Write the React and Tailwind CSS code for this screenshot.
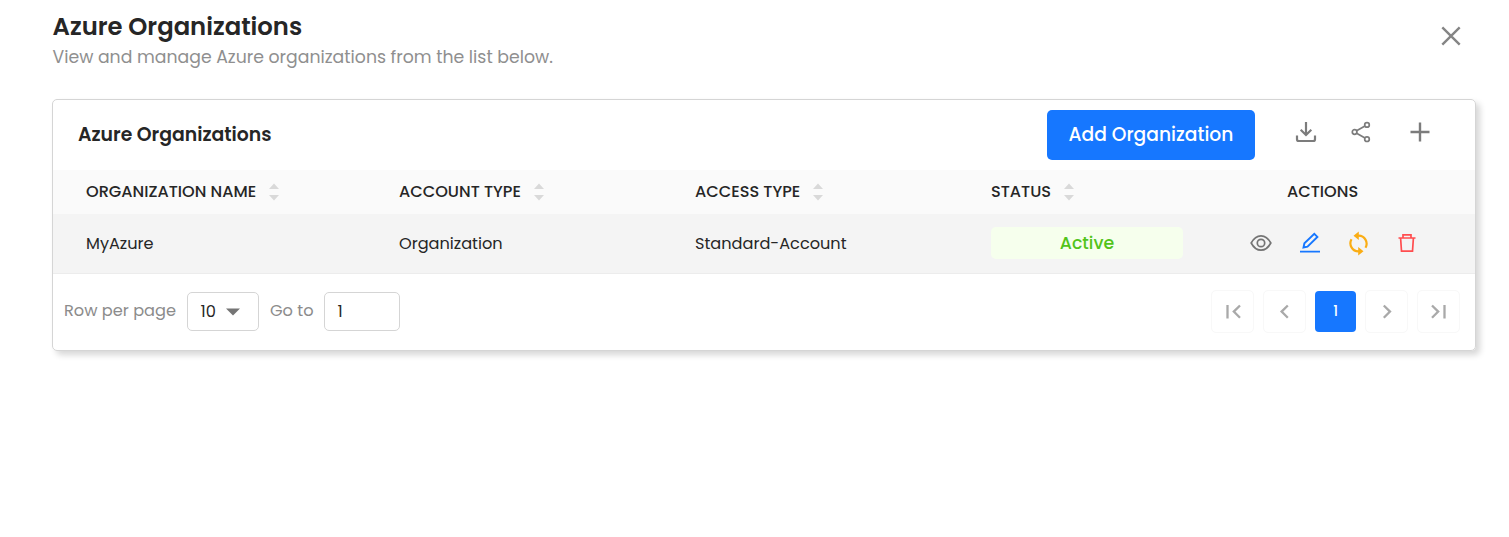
import React from "react";

const Sorter = () => (
  <svg width="10" height="18" viewBox="0 0 10 18" fill="#d9d9d9" className="shrink-0">
    <path d="M0 6 L5 0.5 L10 6Z M0 12 L5 17.5 L10 12Z" />
  </svg>
);

const headers = [
  { label: "ORGANIZATION NAME", style: "w-[313px]" },
  { label: "ACCOUNT TYPE", style: "w-[296px]" },
  { label: "ACCESS TYPE", style: "w-[296px]" },
  { label: "STATUS", style: "w-[225px]" },
];

function Page({ children }) {
  return (
    <button className="flex h-[43px] w-[43px] items-center justify-center rounded-[5px] border border-[#f8f8f8] bg-white">
      {children}
    </button>
  );
}

const Chevrons = ({ d }) => (
  <svg width="18" height="18" viewBox="0 0 18 18" fill="none" stroke="#a9a9a9" strokeWidth="2.3">
    <path d={d} />
  </svg>
);

export default function App() {
  return (
    <div className="h-[537px] w-[1509px] overflow-hidden bg-white font-[Poppins,Inter,sans-serif] text-[#262626]">
      <header className="flex h-[99px] justify-between pr-[48px] pl-[52.5px]">
        <div className="pt-[9px]">
          <h1 className="w-max text-[24.3px] leading-[36px] font-semibold">Azure Organizations</h1>
          <p className="w-max text-[17.3px] leading-[24px] text-[#8f8f8f]">View and manage Azure organizations from the list below.</p>
        </div>
        <svg className="mt-[26px]" width="20" height="20" viewBox="0 0 20 20" stroke="#858585" strokeWidth="2.4">
          <path d="M1.3 1.3 L18.7 18.7 M18.7 1.3 L1.3 18.7" />
        </svg>
      </header>

      <main className="ml-[52px] h-[252px] w-[1424px] rounded-[5px] border border-[#d5d5d5] shadow-[4px_4px_6px_rgba(0,0,0,0.16)]">
        <div className="flex h-[70px] items-start pl-[25px]">
          <h2 className="w-[969px] pt-[21px] text-[18.85px] leading-[27px] font-semibold">Azure Organizations</h2>
          <button className="mt-[10px] flex h-[50px] w-[208px] items-center justify-center rounded-[5px] bg-[#1677ff] text-[18.7px] font-medium whitespace-nowrap text-white">
            <span>Add Organization</span>
          </button>
          <svg className="mt-[21px] ml-[40px]" width="22" height="22" viewBox="0 0 22 22" fill="none" stroke="#7c7c7c" strokeWidth="2.2">
            <path d="M11 1v13M5.7 8.8L11 14l5.3-5.2M2 14.5v3.7q0 1.8 1.8 1.8h14.4q1.8 0 1.8-1.8v-3.7" />
          </svg>
          <svg className="mt-[21px] ml-[33px]" width="22" height="22" viewBox="0 0 22 22" fill="none" stroke="#7c7c7c" strokeWidth="1.7">
            <circle cx="4.6" cy="11" r="2.3" />
            <circle cx="17" cy="3.9" r="2.3" />
            <circle cx="17" cy="18.2" r="2.3" />
            <path d="M6.6 9.8 L15 5.1 M6.6 12.2 L15 17" />
          </svg>
          <svg className="mt-[21px] ml-[37px]" width="22" height="22" viewBox="0 0 22 22" stroke="#7c7c7c" strokeWidth="2.4">
            <path d="M11 1.5v19M1.5 11h19" />
          </svg>
        </div>

        <div className="flex h-[44px] items-center bg-[#fafafa] text-[16.15px] font-medium whitespace-nowrap">
          {headers.map((h) => (
            <div key={h.label} className={`flex items-center gap-[13px] pl-[33px] ${h.style}`}>
              <span>{h.label}</span>
              <Sorter />
            </div>
          ))}
          <div className="pl-[104px]">ACTIONS</div>
        </div>

        <div className="flex h-[60px] items-center border-b border-[#ececec] bg-[#f4f4f4] text-[16.15px] whitespace-nowrap">
          <div className="w-[313px] pt-px pl-[33px]">MyAzure</div>
          <div className="w-[296px] pt-px pl-[33px]">Organization</div>
          <div className="w-[296px] pt-px pl-[33px]">Standard-Account</div>
          <div className="w-[225px] pb-[2px] pl-[33px]">
            <div className="flex h-[32px] w-[192px] items-center justify-center rounded-[5px] bg-[#f6ffed] pt-px text-[17.4px] font-medium text-[#52c41a]">Active</div>
          </div>
          <div className="flex items-center gap-[27px] pb-[2px] pl-[67px]">
            <svg width="22" height="22" viewBox="0 0 22 22" fill="none" stroke="#747474" strokeWidth="1.7">
              <path d="M1.2 11Q5 3.8 11 3.8T20.8 11Q17 18.2 11 18.2T1.2 11Z" />
              <circle cx="11" cy="11" r="3.7" />
            </svg>
            <svg width="22" height="22" viewBox="0 0 22 22" fill="none" stroke="#1677ff" strokeWidth="1.9">
              <path d="M1 19.6h20M4.5 15.5l.9-4.2L15.3 1.8l3.1 3.1-9.9 9.8z" />
            </svg>
            <svg className="-ml-px" width="22" height="26" viewBox="0 0 22 26" fill="none" stroke="#faad14" strokeWidth="2.2">
              <path d="M10.5 5.7h1a8 8 0 0 1 7 12M12.5 21.3h-1A8 8 0 0 1 4.5 9.3" />
              <path d="M11.8 1.5v8.4L6.5 5.7zM11.2 17.1V25.5l5.3-4.2z" fill="#faad14" stroke="none" />
            </svg>
            <svg width="22" height="22" viewBox="0 0 22 22" fill="none" stroke="#ff4d4f" strokeWidth="1.7">
              <path d="M2.5 6h17M4.6 6l.9 13.2h11L17.4 6M7 6V2.8h8V6" />
            </svg>
          </div>
        </div>

        <div className="flex h-[76px] items-start justify-between pr-[15px] pl-[11px] text-[16.2px] text-[#8c8c8c]">
          <div className="flex items-center pt-[18px] whitespace-nowrap">
            <span className="w-[123px] pb-px">Row per page</span>
            <div className="flex h-[39px] w-[72px] items-center rounded-[5px] border border-[#d5d5d5] pt-px pl-[12.5px] text-[#262626]">
              <span className="w-[25.5px]">10</span>
              <svg width="14" height="8" viewBox="0 0 14 8" fill="#757575"><path d="M0 .5h14L7 7.5z" /></svg>
            </div>
            <span className="w-[65px] pb-px pl-[11px]">Go to</span>
            <div className="flex h-[39px] w-[76px] items-center rounded-[5px] border border-[#d5d5d5] pt-px pl-[12.5px] text-[#262626]">1</div>
          </div>
          <div className="flex items-center gap-[9px] pt-[16px]">
            <Page><Chevrons d="M3.5 2v13.5M16 2.5L9.8 8.6l6.2 6.2" /></Page>
            <Page><Chevrons d="M11.8 2.5L5.6 8.6l6.2 6.2" /></Page>
            <button className="flex h-[41px] w-[41px] items-center justify-center rounded-[4px] bg-[#1677ff] pt-[2px] text-[13.5px] font-medium text-white">1</button>
            <Page><Chevrons d="M5.8 2.5l6.2 6.1-6.2 6.2" /></Page>
            <Page><Chevrons d="M2 2.5l6.2 6.1L2 14.8M14.5 2v13.5" /></Page>
          </div>
        </div>
      </main>
    </div>
  );
}
